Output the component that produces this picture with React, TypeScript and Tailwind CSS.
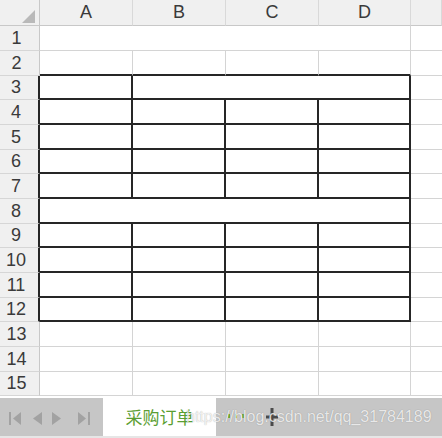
import React from "react";

const COLS = ["A", "B", "C", "D"];
const ROW_H = [25, 25, 24, 25, 25, 24, 25, 25, 24, 25, 25, 24, 25, 25, 24];

type Cell = { span: number; right: boolean; bottom: boolean };

// returns the cells for a row, A..D (merged ones have span > 1)
function rowCells(r: number): Cell[] {
  const inTable = r >= 3 && r <= 12;
  if (r === 1) return [{ span: 4, right: false, bottom: false }];
  if (r === 2) return COLS.map(() => ({ span: 1, right: false, bottom: true }));
  if (r === 3)
    return [
      { span: 1, right: true, bottom: true },
      { span: 3, right: true, bottom: true },
    ];
  if (r === 8) return [{ span: 4, right: true, bottom: true }];
  if (inTable) return COLS.map(() => ({ span: 1, right: true, bottom: true }));
  return COLS.map(() => ({ span: 1, right: false, bottom: false }));
}

function Corner() {
  return (
    <div className="bg-[#f0f0f0] border-r border-b border-[#c8c8c8] relative">
      <svg width="40" height="26" className="absolute left-0 top-0">
        <polygon points="35,10 35,23 22,23" fill="#b9b9b9" />
      </svg>
    </div>
  );
}

export default function App() {
  const spanClass: Record<number, string> = {
    1: "col-span-1",
    3: "col-span-3",
    4: "col-span-4",
  };

  const cells: React.ReactNode[] = [];
  cells.push(<Corner key="corner" />);
  COLS.concat([""]).forEach((c) => {
    cells.push(
      <div
        key={"h" + c}
        className="bg-[#f0f0f0] border-r border-b border-r-[#d9d9d9] border-b-[#c8c8c8] flex items-center justify-center text-[18px] text-[#3a3a3a]"
      >
        {c}
      </div>
    );
  });

  for (let r = 1; r <= 15; r++) {
    const inTable = r >= 3 && r <= 12;
    cells.push(
      <div
        key={"r" + r}
        className={
          "bg-[#f0f0f0] border-b border-b-[#d6d6d6] flex items-center justify-center pr-[6px] text-[18px] text-[#3a3a3a] " +
          (inTable ? "border-r-2 border-r-[#262626]" : "border-r border-r-[#c8c8c8]")
        }
      >
        {r}
      </div>
    );
    rowCells(r).forEach((cell, i) => {
      cells.push(
        <div
          key={"c" + r + "-" + i}
          className={
            "bg-white " +
            spanClass[cell.span] +
            " " +
            (cell.right ? "border-r-2 border-r-[#262626] " : "border-r border-r-[#d4d4d4] ") +
            (cell.bottom ? "border-b-2 border-b-[#262626]" : "border-b border-b-[#d4d4d4]")
          }
        />
      );
    });
    cells.push(
      <div key={"e" + r} className="bg-white border-b border-b-[#d4d4d4]" />
    );
  }

  return (
    <div
      className="w-[442px] h-[438px] bg-white overflow-hidden flex flex-col"
      style={{ fontFamily: '"Liberation Sans", Arial, sans-serif' }}
    >
      <div
        className="grid grid-cols-[40px_93px_93px_93px_92px_1fr]"
        style={{ gridTemplateRows: ["26px", ...ROW_H.map((h) => h + "px")].join(" ") }}
      >
        {cells}
      </div>
      <div className="h-[2px] bg-white" />
      <div className="relative h-[38px] flex bg-[#c6c6c6]">
        <div className="w-[103px] h-full">
          <svg width="103" height="38">
            <g fill="#a2a2a2">
              <rect x="9" y="14" width="2" height="13" />
              <polygon points="21,14 21,27 13,20.5" />
              <polygon points="42,14 42,27 33,20.5" />
              <polygon points="52,14 52,27 61,20.5" />
              <polygon points="78,14 78,27 86,20.5" />
              <rect x="88" y="14" width="2" height="13" />
            </g>
          </svg>
        </div>
        <div className="w-[113px] h-full bg-white flex items-center justify-center">
          <span
            className="text-[17px] text-[#5a9e32]"
            style={{ fontFamily: '"Noto Sans CJK SC", "Liberation Sans", sans-serif' }}
          >
            采购订单
          </span>
        </div>
        <div className="flex-1 flex items-center">
          {/* sheet overflow dots */}
          <svg width="20" height="20" className="ml-[10px]">
            <g fill="#6aaa3a">
              <rect x="2" y="7" width="2" height="4" />
              <rect x="9" y="7" width="2" height="4" />
              <rect x="16" y="7" width="2" height="4" />
            </g>
          </svg>
          <svg width="14" height="20" className="ml-[19px]">
            <rect x="5.5" y="1" width="3" height="18" fill="#4a4a4a" />
            <rect x="1" y="8.5" width="12" height="3" fill="#4a4a4a" />
          </svg>
        </div>
        <div className="absolute left-[186px] top-0 h-full flex items-center pointer-events-none">
          <span className="text-[16px] text-white/80 [text-shadow:0_0_1px_rgba(0,0,0,0.35)]">
            https://blog.csdn.net/qq_31784189
          </span>
        </div>
      </div>
      <div className="flex-1 bg-[#e6e6e6]" />
    </div>
  );
}
